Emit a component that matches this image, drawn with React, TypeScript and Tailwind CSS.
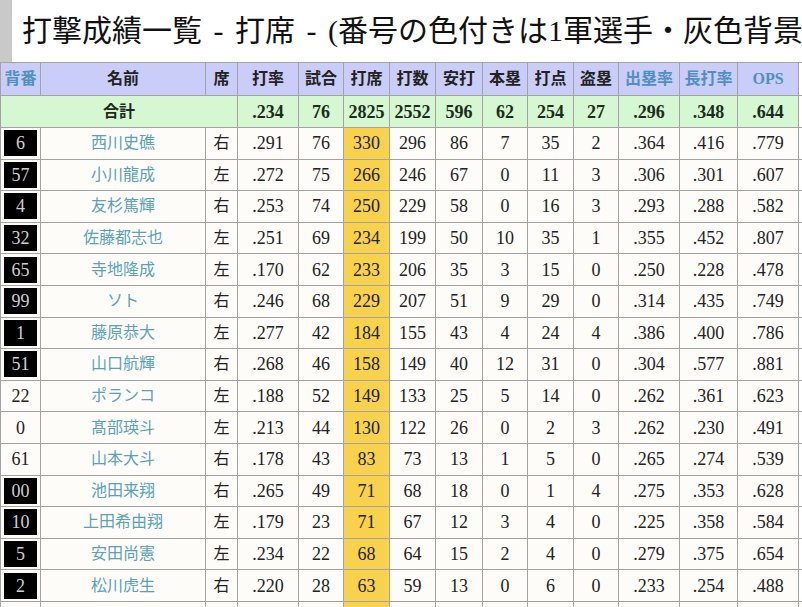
import React from 'react';

type Row = {
  no: string;
  name: string;
  hand: string;
  avg: string;
  g: number;
  pa: number;
  ab: number;
  h: number;
  hr: number;
  rbi: number;
  sb: number;
  obp: string;
  slg: string;
  ops: string;
  top: boolean;
};

const rows: Row[] = [
  { no: '6', name: '西川史礁', hand: '右', avg: '.291', g: 76, pa: 330, ab: 296, h: 86, hr: 7, rbi: 35, sb: 2, obp: '.364', slg: '.416', ops: '.779', top: true },
  { no: '57', name: '小川龍成', hand: '左', avg: '.272', g: 75, pa: 266, ab: 246, h: 67, hr: 0, rbi: 11, sb: 3, obp: '.306', slg: '.301', ops: '.607', top: true },
  { no: '4', name: '友杉篤輝', hand: '右', avg: '.253', g: 74, pa: 250, ab: 229, h: 58, hr: 0, rbi: 16, sb: 3, obp: '.293', slg: '.288', ops: '.582', top: true },
  { no: '32', name: '佐藤都志也', hand: '左', avg: '.251', g: 69, pa: 234, ab: 199, h: 50, hr: 10, rbi: 35, sb: 1, obp: '.355', slg: '.452', ops: '.807', top: true },
  { no: '65', name: '寺地隆成', hand: '左', avg: '.170', g: 62, pa: 233, ab: 206, h: 35, hr: 3, rbi: 15, sb: 0, obp: '.250', slg: '.228', ops: '.478', top: true },
  { no: '99', name: 'ソト', hand: '右', avg: '.246', g: 68, pa: 229, ab: 207, h: 51, hr: 9, rbi: 29, sb: 0, obp: '.314', slg: '.435', ops: '.749', top: true },
  { no: '1', name: '藤原恭大', hand: '左', avg: '.277', g: 42, pa: 184, ab: 155, h: 43, hr: 4, rbi: 24, sb: 4, obp: '.386', slg: '.400', ops: '.786', top: true },
  { no: '51', name: '山口航輝', hand: '右', avg: '.268', g: 46, pa: 158, ab: 149, h: 40, hr: 12, rbi: 31, sb: 0, obp: '.304', slg: '.577', ops: '.881', top: true },
  { no: '22', name: 'ポランコ', hand: '左', avg: '.188', g: 52, pa: 149, ab: 133, h: 25, hr: 5, rbi: 14, sb: 0, obp: '.262', slg: '.361', ops: '.623', top: false },
  { no: '0', name: '髙部瑛斗', hand: '左', avg: '.213', g: 44, pa: 130, ab: 122, h: 26, hr: 0, rbi: 2, sb: 3, obp: '.262', slg: '.230', ops: '.491', top: false },
  { no: '61', name: '山本大斗', hand: '右', avg: '.178', g: 43, pa: 83, ab: 73, h: 13, hr: 1, rbi: 5, sb: 0, obp: '.265', slg: '.274', ops: '.539', top: false },
  { no: '00', name: '池田来翔', hand: '右', avg: '.265', g: 49, pa: 71, ab: 68, h: 18, hr: 0, rbi: 1, sb: 4, obp: '.275', slg: '.353', ops: '.628', top: true },
  { no: '10', name: '上田希由翔', hand: '左', avg: '.179', g: 23, pa: 71, ab: 67, h: 12, hr: 3, rbi: 4, sb: 0, obp: '.225', slg: '.358', ops: '.584', top: true },
  { no: '5', name: '安田尚憲', hand: '左', avg: '.234', g: 22, pa: 68, ab: 64, h: 15, hr: 2, rbi: 4, sb: 0, obp: '.279', slg: '.375', ops: '.654', top: true },
  { no: '2', name: '松川虎生', hand: '右', avg: '.220', g: 28, pa: 63, ab: 59, h: 13, hr: 0, rbi: 6, sb: 0, obp: '.233', slg: '.254', ops: '.488', top: true },
];

const widths = [40, 165, 32, 61, 45, 46, 46, 47, 45, 46, 45, 61, 58, 61, 60];

const cell = 'border border-[#a3a3a3] text-center p-0';

const headers: { label: string; link?: boolean }[] = [
  { label: '背番', link: true },
  { label: '名前' },
  { label: '席' },
  { label: '打率' },
  { label: '試合' },
  { label: '打席' },
  { label: '打数' },
  { label: '安打' },
  { label: '本塁' },
  { label: '打点' },
  { label: '盗塁' },
  { label: '出塁率', link: true },
  { label: '長打率', link: true },
  { label: 'OPS', link: true },
  { label: '' },
];

export default function App() {
  return (
    <div
      className="w-[802px] h-[607px] overflow-hidden bg-white text-[#222]"
      style={{ fontFamily: '"Liberation Serif", "Noto Sans CJK JP", serif' }}
    >
      {/* page heading */}
      <div className="flex h-[62px]">
        <div className="w-[12px] shrink-0 bg-[#c9c9c9]" />
        <h1 className="pl-[10px] pt-[11px] text-[30px] leading-[40px] whitespace-nowrap text-[#111]">
          打撃成績一覧<span className="px-[4px]"> - </span>打席<span className="px-[4px]"> - </span>(番号の色付きは1軍選手・灰色背景は2軍選手)
        </h1>
      </div>

      <table className="table-fixed border-collapse w-[858px] text-[18px] leading-none">
        <colgroup>
          {widths.map((w, i) => (
            <col key={i} style={{ width: w }} />
          ))}
        </colgroup>
        <thead>
          <tr className="h-[33px] bg-[#c9cdf7]">
            {headers.map((h, i) => (
              <th
                key={i}
                className={`${cell} text-[16px] font-bold ${h.link ? 'text-[#4f8fc2]' : 'text-[#222]'} ${i === 14 ? 'bg-white' : ''}`}
              >
                {h.label}
              </th>
            ))}
          </tr>
        </thead>
        <tbody>
          <tr className="h-[32px] bg-[#d5f8d2] font-bold text-[#1c2c1c]">
            <td colSpan={3} className={`${cell} text-[16px]`}>合計</td>
            <td className={cell}>.234</td>
            <td className={cell}>76</td>
            <td className={cell}>2825</td>
            <td className={cell}>2552</td>
            <td className={cell}>596</td>
            <td className={cell}>62</td>
            <td className={cell}>254</td>
            <td className={cell}>27</td>
            <td className={cell}>.296</td>
            <td className={cell}>.348</td>
            <td className={cell}>.644</td>
            <td className={`${cell} bg-white`} />
          </tr>
          {rows.map((r) => (
            <tr key={r.no + r.name} className="h-[31.6px] bg-[#fdfcf9]">
              <td className={`${cell} px-[3px] py-[2px]`}>
                {r.top ? (
                  <div className="h-[26px] bg-black text-[#cfcfcf] flex items-center justify-center">{r.no}</div>
                ) : (
                  <span>{r.no}</span>
                )}
              </td>
              <td className={`${cell} text-[16px] text-[#5aa2b8]`}>{r.name}</td>
              <td className={`${cell} text-[16px]`}>{r.hand}</td>
              <td className={cell}>{r.avg}</td>
              <td className={cell}>{r.g}</td>
              <td className={`${cell} bg-[#f8d24c]`}>{r.pa}</td>
              <td className={cell}>{r.ab}</td>
              <td className={cell}>{r.h}</td>
              <td className={cell}>{r.hr}</td>
              <td className={cell}>{r.rbi}</td>
              <td className={cell}>{r.sb}</td>
              <td className={cell}>{r.obp}</td>
              <td className={cell}>{r.slg}</td>
              <td className={cell}>{r.ops}</td>
              <td className={`${cell} bg-white`} />
            </tr>
          ))}
          <tr className="h-[31.6px] bg-[#fdfcf9]">
            {widths.map((_, i) => (
              <td key={i} className={`${cell} ${i === 5 ? 'bg-[#f8d24c]' : ''}`} />
            ))}
          </tr>
        </tbody>
      </table>
    </div>
  );
}
